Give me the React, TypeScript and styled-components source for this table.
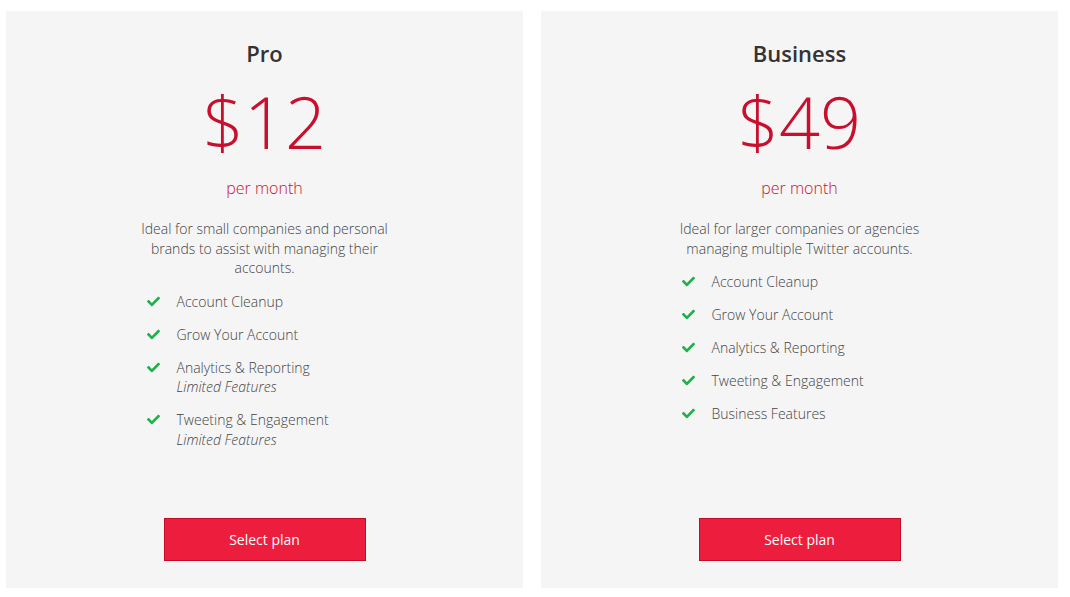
import React from "react";
import styled, { createGlobalStyle } from "styled-components";
import { FaCheck } from "react-icons/fa";

const GlobalStyle = createGlobalStyle`
  html, body { margin: 0; padding: 0; background: #ffffff; }
  body { font-family: "Open Sans", "Liberation Sans", sans-serif; }
  * { box-sizing: border-box; }
`;

const Page = styled.div`
  height: 597px;
  padding: 11px 12px 9px 6px;
  display: grid;
  grid-template-columns: 1fr 1fr;
  column-gap: 18px;
`;

const Card = styled.section`
  background: #f5f5f5;
  display: flex;
  flex-direction: column;
  align-items: center;
  padding: 29px 0 27px;
`;

const Title = styled.h2`
  margin: 0;
  font-size: 22px;
  line-height: 26px;
  font-weight: 600;
  color: #333333;
`;

const Price = styled.div`
  margin-top: 19px;
  font-size: 72px;
  line-height: 72px;
  font-weight: 300;
  color: #c8102e;
`;

const Period = styled.div`
  margin-top: 20px;
  font-size: 16px;
  line-height: 22px;
  font-weight: 300;
  color: #c8102e;
`;

const Body = styled.div`
  width: 256px;
  margin-top: 20px;
`;

const Description = styled.p`
  margin: 0;
  font-size: 14px;
  line-height: 19.5px;
  font-weight: 300;
  color: #444444;
  text-align: center;
`;

const Features = styled.ul`
  list-style: none;
  margin: 14px 0 0;
  padding: 0 0 0 10px;
  display: flex;
  flex-direction: column;
  gap: 13.5px;
`;

const Feature = styled.li`
  display: grid;
  grid-template-columns: 30px 1fr;
  font-size: 14px;
  line-height: 19.5px;
  font-weight: 300;
  color: #444444;
`;

const Check = styled.span`
  display: flex;
  align-items: center;
  height: 19.5px;
  color: #1fb04b;
`;

const Note = styled.em`
  display: block;
  font-style: italic;
`;

const SelectButton = styled.button`
  margin-top: auto;
  width: 202px;
  height: 43px;
  background: #ec1d3d;
  border: 1px solid #c40c28;
  color: #ffffff;
  font-family: "Open Sans", "Liberation Sans", sans-serif;
  font-size: 14px;
  font-weight: 400;
  cursor: pointer;
`;

type Item = { label: string; note?: string };
type Plan = { name: string; price: string; description: string; items: Item[] };

const plans: Plan[] = [
  {
    name: "Pro",
    price: "$12",
    description:
      "Ideal for small companies and personal brands to assist with managing their accounts.",
    items: [
      { label: "Account Cleanup" },
      { label: "Grow Your Account" },
      { label: "Analytics & Reporting", note: "Limited Features" },
      { label: "Tweeting & Engagement", note: "Limited Features" },
    ],
  },
  {
    name: "Business",
    price: "$49",
    description:
      "Ideal for larger companies or agencies managing multiple Twitter accounts.",
    items: [
      { label: "Account Cleanup" },
      { label: "Grow Your Account" },
      { label: "Analytics & Reporting" },
      { label: "Tweeting & Engagement" },
      { label: "Business Features" },
    ],
  },
];

export default function App() {
  return (
    <>
      <GlobalStyle />
      <Page>
        {plans.map((p) => (
          <Card key={p.name}>
            <Title>{p.name}</Title>
            <Price>{p.price}</Price>
            <Period>per month</Period>
            <Body>
              <Description>{p.description}</Description>
              <Features>
                {p.items.map((it) => (
                  <Feature key={it.label}>
                    <Check>
                      <FaCheck size={13} />
                    </Check>
                    <div>
                      {it.label}
                      {it.note && <Note>{it.note}</Note>}
                    </div>
                  </Feature>
                ))}
              </Features>
            </Body>
            <SelectButton>Select plan</SelectButton>
          </Card>
        ))}
      </Page>
    </>
  );
}
